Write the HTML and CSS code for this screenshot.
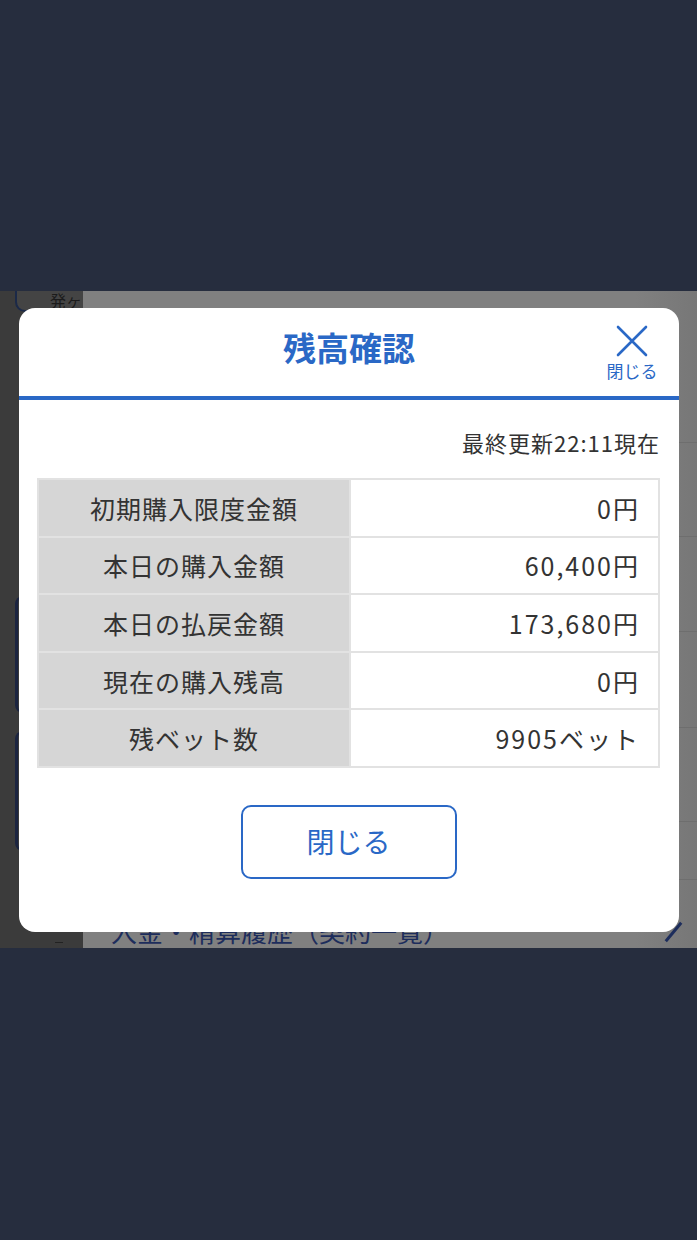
FILE: index.html
```html
<!DOCTYPE html>
<html lang="ja">
<head>
<meta charset="utf-8">
<title>残高確認</title>
<link rel="stylesheet" href="styles.css">
</head>
<body>
<div class="frame-top"></div>
<div class="stage">
  <div class="app">
    <div class="side">
      <div class="side-btn"><span>発ヶ</span></div>
      <div class="side-card c1"></div>
      <div class="side-card c2"></div>
      <div class="side-dash"></div>
    </div>
    <div class="main">
      <div class="row r0"></div>
      <div class="row r1"></div>
      <div class="row r2"></div>
      <div class="row r3"></div>
      <div class="row r4"></div>
      <div class="row r5"></div>
      <div class="row last"><span class="link-text">入金・精算履歴（契約一覧）</span><span class="chev"></span></div>
    </div>
  </div>
  <div class="modal">
    <div class="modal-head">
      <h1 class="title">残高確認</h1>
      <div class="close">
        <svg class="close-x" width="32" height="32" viewBox="0 0 32 32"><path d="M2 2 L30 30 M30 2 L2 30" stroke="#2a68c6" stroke-width="2.6" fill="none" stroke-linecap="round"/></svg>
        <span class="close-label">閉じる</span>
      </div>
    </div>
    <div class="modal-body">
      <div class="stamp">最終更新22:11現在</div>
      <table class="bal">
        <tr><th>初期購入限度金額</th><td>0円</td></tr>
        <tr><th>本日の購入金額</th><td>60,400円</td></tr>
        <tr><th>本日の払戻金額</th><td>173,680円</td></tr>
        <tr><th>現在の購入残高</th><td>0円</td></tr>
        <tr><th>残ベット数</th><td>9905ベット</td></tr>
      </table>
      <div class="actions"><button class="btn">閉じる</button></div>
    </div>
  </div>
</div>
<div class="frame-bottom"></div>
</body>
</html>
```

FILE: styles.css
```css
* { box-sizing: border-box; }
html, body { margin: 0; padding: 0; }
body {
  background: #262d3e;
  font-family: "Noto Sans CJK JP", "Noto Sans", sans-serif;
  width: 697px;
  height: 1240px;
  overflow: hidden;
}
.frame-top { height: 291px; background: #262d3e; }
.frame-bottom { height: 292px; background: #262d3e; }
.stage {
  position: relative;
  height: 657px;
  overflow: hidden;
}
.app {
  display: flex;
  height: 100%;
  background: #7f7f7f;
}
.side {
  position: relative;
  width: 83px;
  background: #3b3b3b;
  overflow: hidden;
  flex: none;
}
.side-btn {
  position: absolute;
  left: 15px;
  top: -30px;
  width: 120px;
  height: 51px;
  border: 2px solid #1b2948;
  border-radius: 10px;
  background: #444;
}
.side-btn span {
  position: absolute;
  left: 33px;
  bottom: 0;
  font-size: 16px;
  line-height: 1.1;
  color: #1b1b1b;
}
.side-card {
  position: absolute;
  left: 15px;
  width: 80px;
  border-left: 3px solid #1b2440;
  border-radius: 8px 0 0 8px;
}
.c1 { top: 305px; height: 117px; }
.c2 { top: 440px; height: 120px; }
.side-dash {
  position: absolute;
  left: 55px;
  top: 651px;
  width: 8px;
  height: 1px;
  background: #222;
}
.main {
  flex: 1;
  display: flex;
  flex-direction: column;
  background: linear-gradient(to right, #808080 0%, #808080 90%, #777 100%);
}
.row { border-bottom: 1px solid #6e6e6e; flex: none; }
.r0 { height: 152px; }
.r1 { height: 94px; }
.r2 { height: 95px; }
.r3 { height: 96px; }
.r4 { height: 94px; }
.r5 { height: 58px; }
.row.last {
  flex: 1;
  border: 0;
  position: relative;
}
.link-text {
  position: absolute;
  left: 28px;
  top: 32px;
  font-size: 26px;
  color: #1d2d5c;
  white-space: nowrap;
}
.chev {
  position: absolute;
  right: 22px;
  top: 40px;
  width: 3px;
  height: 24px;
  background: #1d2d5c;
  transform: rotate(40deg);
}
.modal {
  position: absolute;
  left: 19px;
  top: 17px;
  width: 660px;
  height: 624px;
  background: #fff;
  border-radius: 16px;
  overflow: hidden;
}
.modal-head {
  position: relative;
  height: 92px;
  border-bottom: 4px solid #2a68c6;
  display: flex;
  align-items: center;
  justify-content: center;
}
.title {
  margin: 0;
  font-size: 33px;
  font-weight: 700;
  color: #2a68c6;
  line-height: 1;
  padding-bottom: 9px;
}
.close {
  position: absolute;
  right: 18px;
  top: 17px;
  display: flex;
  flex-direction: column;
  align-items: center;
  width: 58px;
}
.close-x { display: block; }
.close-label {
  font-size: 17px;
  line-height: 1;
  margin-top: 5px;
  color: #2a68c6;
}
.modal-body { padding: 0 19px 0 18px; }
.stamp {
  text-align: right;
  font-size: 22px;
  letter-spacing: 1px;
  color: #333;
  line-height: 1;
  padding: 31px 0 0;
  height: 78px;
}
.bal {
  width: 100%;
  border-collapse: collapse;
  border: 2px solid #e2e2e2;
}
.bal th, .bal td {
  height: 57.6px;
  border: 2px solid #e2e2e2;
  font-size: 25px;
  font-weight: 400;
  color: #333;
  padding: 0;
}
.bal th {
  width: 312px;
  background: #d6d6d6;
  text-align: center;
  letter-spacing: 1px;
}
.bal td {
  text-align: right;
  padding-right: 18px;
  letter-spacing: 2px;
  background: #fff;
}
.actions {
  display: flex;
  justify-content: center;
  padding-top: 37px;
}
.btn {
  width: 216px;
  height: 74px;
  border: 2px solid #2a68c6;
  border-radius: 10px;
  background: #fff;
  color: #2a68c6;
  font-family: "Noto Sans CJK JP", "Noto Sans", sans-serif;
  font-size: 28px;
  padding: 0 0 2px;
}
```
